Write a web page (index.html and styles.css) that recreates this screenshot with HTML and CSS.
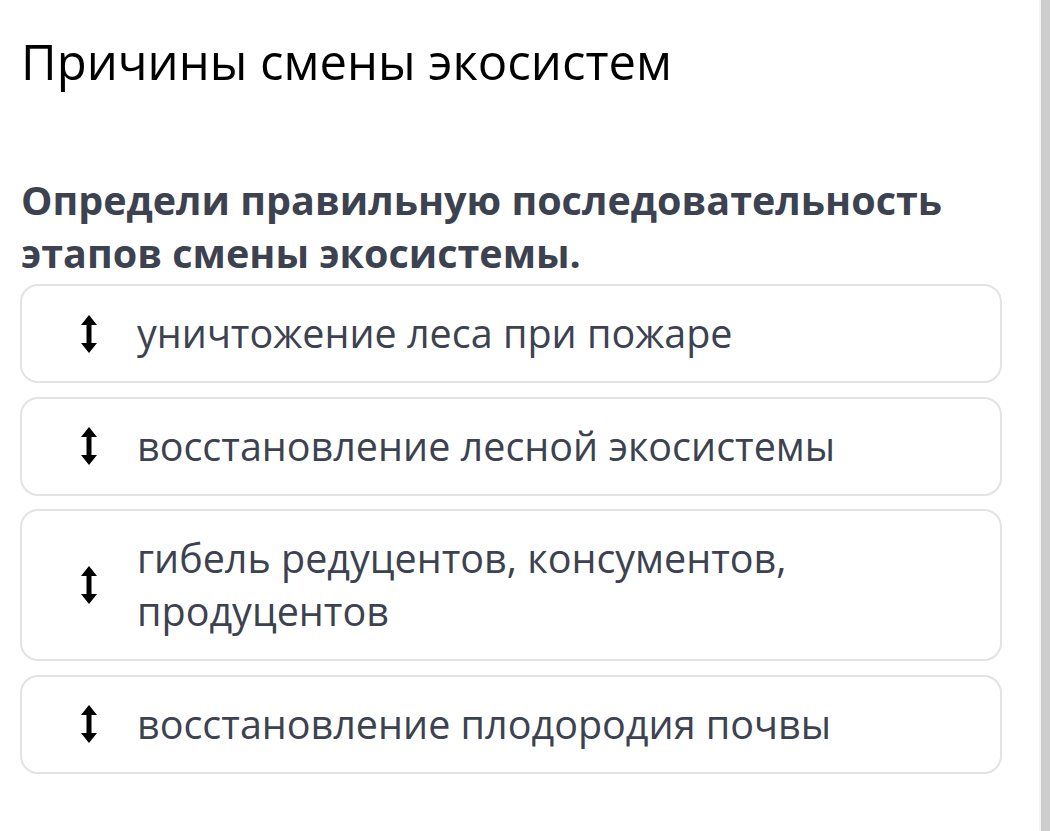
FILE: index.html
```html
<!DOCTYPE html>
<html lang="ru">
<head>
	<meta charset="UTF-8">
	<title>Причины смены экосистем</title>
	<link rel="stylesheet" href="styles.css">
</head>
<body>
	<div class="page">
		<div class="content">
			<h1 class="title">Причины смены экосистем</h1>
			<p class="question">Определи правильную последовательность этапов смены экосистемы.</p>

			<ul class="items">
				<li class="item">
					<span class="handle">
						<svg width="18" height="38" viewBox="0 0 18 38"><path d="M9 0 L17 10 L11.5 10 L11.5 28 L17 28 L9 38 L1 28 L6.5 28 L6.5 10 L1 10 Z" fill="#000"/></svg>
					</span>
					<span class="text">уничтожение леса при пожаре</span>
				</li>
				<li class="item">
					<span class="handle">
						<svg width="18" height="38" viewBox="0 0 18 38"><path d="M9 0 L17 10 L11.5 10 L11.5 28 L17 28 L9 38 L1 28 L6.5 28 L6.5 10 L1 10 Z" fill="#000"/></svg>
					</span>
					<span class="text">восстановление лесной экосистемы</span>
				</li>
				<li class="item">
					<span class="handle">
						<svg width="18" height="38" viewBox="0 0 18 38"><path d="M9 0 L17 10 L11.5 10 L11.5 28 L17 28 L9 38 L1 28 L6.5 28 L6.5 10 L1 10 Z" fill="#000"/></svg>
					</span>
					<span class="text">гибель редуцентов, консументов, продуцентов</span>
				</li>
				<li class="item">
					<span class="handle">
						<svg width="18" height="38" viewBox="0 0 18 38"><path d="M9 0 L17 10 L11.5 10 L11.5 28 L17 28 L9 38 L1 28 L6.5 28 L6.5 10 L1 10 Z" fill="#000"/></svg>
					</span>
					<span class="text">восстановление плодородия почвы</span>
				</li>
			</ul>
		</div>
		<div class="scrollbar"></div>
	</div>
</body>
</html>
```

FILE: styles.css
```css
* {
    margin: 0;
    padding: 0;
    box-sizing: border-box;
}

html, body {
    height: 100%;
}

body {
    background: #fff;
    font-family: "Open Sans", "Noto Sans", sans-serif;
    overflow: hidden;
}

.page {
    display: flex;
    height: 100%;
}

.content {
    flex: 1;
    padding: 30px 37px 0 20px;
}

.scrollbar {
    width: 11px;
    background: #cdcdcd;
    border-left: 2px solid #f3f3f3;
}

.title {
    font-size: 49px;
    font-weight: 400;
    line-height: 62px;
    color: #000;
    padding-left: 1px;
}

.question {
    margin-top: 82px;
    font-size: 39.5px;
    font-weight: 700;
    line-height: 53px;
    color: #3c4250;
    padding-left: 1px;
}

.items {
    list-style: none;
    display: flex;
    flex-direction: column;
    gap: 13.5px;
    margin-top: 4px;
}

.item {
    display: flex;
    align-items: center;
    padding: 21px 100px 21px 0;
    border: 2px solid #e3e3e3;
    border-radius: 18px;
}

.handle {
    display: flex;
    justify-content: center;
    flex-shrink: 0;
    width: 115px;
    padding-left: 31px;
    padding-right: 12px;
}

.text {
    font-size: 39.5px;
    line-height: 53px;
    color: #3c4250;
}
```
